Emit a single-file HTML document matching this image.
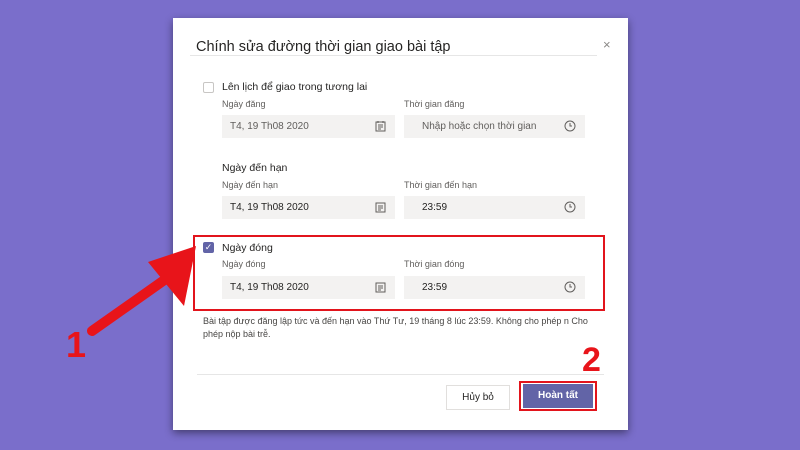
<!DOCTYPE html>
<html><head><meta charset="utf-8"><style>
*{margin:0;padding:0;box-sizing:border-box}
body{width:800px;height:450px;background:#7a6ecb;position:relative;overflow:hidden;font-family:"Liberation Sans",sans-serif;color:#252423}
.dlg{position:absolute;left:173px;top:18px;width:455px;height:412px;background:#fff;box-shadow:0 3px 8px rgba(0,0,0,.45)}
.a{position:absolute}
.t{font-size:14.5px;left:23px;top:21px;color:#252423}
.hr{position:absolute;height:1px;background:#e6e6e6}
.lbl{font-size:9px;color:#605e5c}
.inp{position:absolute;height:23px;background:#f3f2f1;font-size:10px;color:#605e5c;padding:6px 0 0 8px}
.cb{position:absolute;width:11px;height:11px;border:1px solid #c8c6c4;border-radius:2px}
.ic{position:absolute;right:9px;top:5px}
</style></head><body>
<div class="dlg">
 <div class="a t">Chính sửa đường thời gian giao bài tập</div>
 <div class="hr" style="left:17px;top:37px;width:407px"></div>
 <div class="a" style="left:430px;top:19px;font-size:13px;color:#8a8886">×</div>
 <div class="cb" style="left:30px;top:64px"></div>
 <div class="a" style="left:49px;top:63px;font-size:10.5px">Lên lịch để giao trong tương lai</div>
 <div class="a lbl" style="left:49px;top:81px">Ngày đăng</div>
 <div class="a lbl" style="left:231px;top:81px">Thời gian đăng</div>
 <div class="inp" style="left:49px;top:97px;width:173px">T4, 19 Th08 2020<svg class="ic" width="11" height="12" viewBox="0 0 11 12"><rect x="1" y="2" width="9" height="9" fill="none" stroke="#605e5c"/><path d="M3 5h5M3 7h5M3 9h3M3 1v2M8 1v2" stroke="#605e5c"/></svg></div>
 <div class="inp" style="left:231px;top:97px;width:181px;padding-left:18px">Nhập hoặc chọn thời gian<svg class="ic" width="12" height="12" viewBox="0 0 12 12"><circle cx="6" cy="6" r="5" fill="none" stroke="#605e5c"/><path d="M6 3v3h2" fill="none" stroke="#605e5c"/></svg></div>
 <div class="a" style="left:49px;top:144px;font-size:10.5px">Ngày đến hạn</div>
 <div class="a lbl" style="left:49px;top:162px">Ngày đến hạn</div>
 <div class="a lbl" style="left:231px;top:162px">Thời gian đến hạn</div>
 <div class="inp" style="left:49px;top:178px;width:173px;color:#252423">T4, 19 Th08 2020<svg class="ic" width="11" height="12" viewBox="0 0 11 12"><rect x="1" y="2" width="9" height="9" fill="none" stroke="#605e5c"/><path d="M3 5h5M3 7h5M3 9h3" stroke="#605e5c"/></svg></div>
 <div class="inp" style="left:231px;top:178px;width:181px;padding-left:18px;color:#252423">23:59<svg class="ic" width="12" height="12" viewBox="0 0 12 12"><circle cx="6" cy="6" r="5" fill="none" stroke="#605e5c"/><path d="M6 3v3h2" fill="none" stroke="#605e5c"/></svg></div>
 <div class="a" style="left:20px;top:217px;width:412px;height:76px;border:2px solid #e2141c"></div>
 <div class="a" style="left:30px;top:224px;width:11px;height:11px;background:#6264a7;border-radius:2px;color:#fff;font-size:9px;line-height:11px;text-align:center">✓</div>
 <div class="a" style="left:49px;top:224px;font-size:10.5px">Ngày đóng</div>
 <div class="a lbl" style="left:49px;top:241px">Ngày đóng</div>
 <div class="a lbl" style="left:231px;top:241px">Thời gian đóng</div>
 <div class="inp" style="left:49px;top:258px;width:173px;color:#252423">T4, 19 Th08 2020<svg class="ic" width="11" height="12" viewBox="0 0 11 12"><rect x="1" y="2" width="9" height="9" fill="none" stroke="#605e5c"/><path d="M3 5h5M3 7h5M3 9h3" stroke="#605e5c"/></svg></div>
 <div class="inp" style="left:231px;top:258px;width:181px;padding-left:18px;color:#252423">23:59<svg class="ic" width="12" height="12" viewBox="0 0 12 12"><circle cx="6" cy="6" r="5" fill="none" stroke="#605e5c"/><path d="M6 3v3h2" fill="none" stroke="#605e5c"/></svg></div>
 <div class="a" style="left:30px;top:297px;width:405px;font-size:9px;line-height:13px;color:#484644">Bài tập được đăng lập tức và đến hạn vào Thứ Tư, 19 tháng 8 lúc 23:59. Không cho phép n Cho phép nộp bài trễ.</div>
 <div class="hr" style="left:24px;top:356px;width:407px"></div>
 <div class="a" style="left:273px;top:367px;width:64px;height:25px;border:1px solid #e1dfdd;font-size:10px;text-align:center;line-height:23px">Hủy bỏ</div>
 <div class="a" style="left:346px;top:363px;width:78px;height:30px;border:2px solid #e2141c"></div>
 <div class="a" style="left:350px;top:366px;width:70px;height:24px;background:#6264a7;color:#fff;font-size:10px;font-weight:bold;text-align:center;line-height:24px">Hoàn tất</div>
</div>
<svg class="a" style="left:0;top:0" width="800" height="450">
 <path d="M92 331 L170 276" stroke="#e8141a" stroke-width="10" stroke-linecap="round"/>
 <path d="M196 246 L148 262 L184 306 Z" fill="#e8141a"/>
</svg>
<div class="a" style="left:66px;top:324px;font-size:36px;font-weight:bold;color:#e8141a">1</div>
<div class="a" style="left:582px;top:341px;font-size:34px;font-weight:bold;color:#e8141a">2</div>
</body></html>
